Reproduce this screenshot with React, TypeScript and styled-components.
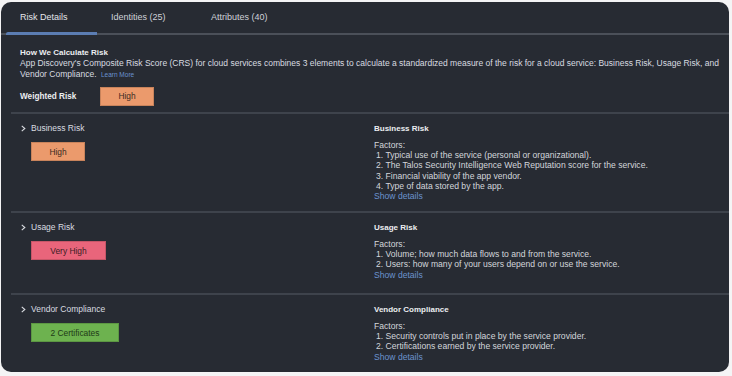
import styled, {createGlobalStyle} from "styled-components";

const GlobalStyle = createGlobalStyle`
  html, body {
    margin: 0;
    padding: 0;
    background: #f4f4f5;
  }
  body {
    font-family: "Liberation Sans", Arial, sans-serif;
  }
`;

const Panel = styled.div`
  margin: 2px 3px 0 1px;
  width: 728px;
  height: 370px;
  background: #272b33;
  border-radius: 10px;
  overflow: hidden;
  color: #d9dbe0;
  display: flex;
  flex-direction: column;
`;

const TabBar = styled.div`
  display: flex;
  height: 31px;
  border-bottom: 2px solid #4b5059;
  padding-left: 5px;
`;

const Tab = styled.div<{ $active?: boolean; $width: number }>`
  position: relative;
  width: ${p => p.$width}px;
  padding-left: 14px;
  box-sizing: border-box;
  font-size: 9px;
  line-height: 31px;
  color: ${p => (p.$active ? "#e4e6ea" : "#cfd2d8")};

  &::after {
    content: "";
    display: ${p => (p.$active ? "block" : "none")};
    position: absolute;
    left: 0;
    right: 0;
    bottom: -2px;
    height: 3px;
    background: #5b7db3;
    border-radius: 2px 0 0 0;
  }
`;

const Intro = styled.div`
  padding: 12px 5px 6px 19px;
  font-size: 8.5px;
  line-height: 11px;
`;

const Heading = styled.div`
  font-weight: bold;
  font-size: 8px;
  line-height: 11px;
  color: #eceef1;
`;

const TextLine = styled.div`
  white-space: nowrap;
`;

const Link = styled.span`
  color: #6b93cf;
  font-size: 6.5px;
  margin-left: 2px;
`;

const WeightedRow = styled.div`
  display: flex;
  align-items: center;
  margin-top: 7px;
`;

const WeightedLabel = styled.div`
  width: 80px;
  font-weight: bold;
  font-size: 8.2px;
  color: #eceef1;
`;

const Badge = styled.div<{ $color: string; $width: number; $text: string }>`
  width: ${p => p.$width}px;
  height: 19px;
  box-sizing: border-box;
  background: ${p => p.$color};
  color: ${p => p.$text};
  border: 1px solid rgba(0, 0, 0, 0.15);
  font-size: 8.4px;
  display: flex;
  align-items: center;
  justify-content: center;
`;

const Divider = styled.div`
  height: 2px;
  margin-left: 10px;
  background: #3e434c;
`;

const Row = styled.div<{ $height: number }>`
  display: grid;
  grid-template-columns: 354px 1fr;
  height: ${p => p.$height}px;
  padding: 9px 0 0 19px;
  box-sizing: border-box;
  font-size: 8.6px;
`;

const LeftCol = styled.div`
  display: flex;
  flex-direction: column;
  align-items: flex-start;
  gap: 8px;
`;

const RowLabel = styled.div`
  display: flex;
  align-items: center;
  gap: 4px;
  font-size: 8.5px;
  line-height: 11px;
  color: #d9dbe0;
`;

const Chevron = styled.svg`
  width: 7px;
  height: 7px;
`;

const BadgeWrap = styled.div`
  padding-left: 11px;
`;

const RightCol = styled.div`
  display: flex;
  flex-direction: column;
`;

const Factors = styled.div`
  margin-top: 6px;
  line-height: 10.2px;
  color: #d3d6db;
`;

const FactorItem = styled.div`
  padding-left: 2px;
`;

const ShowDetails = styled.div`
  color: #6b93cf;
  line-height: 10.2px;
`;

type RiskRow = {
    name: string;
    badge: string;
    color: string;
    text: string;
    width: number;
    height: number;
    factors: string[];
};

const rows: RiskRow[] = [
    {
        name: "Business Risk",
        badge: "High",
        color: "#eb9a6c",
        text: "#3a2a22",
        width: 54,
        height: 97,
        factors: [
            "Typical use of the service (personal or organizational).",
            "The Talos Security Intelligence Web Reputation score for the service.",
            "Financial viability of the app vendor.",
            "Type of data stored by the app.",
        ],
    },
    {
        name: "Usage Risk",
        badge: "Very High",
        color: "#e9657b",
        text: "#3a1d24",
        width: 75,
        height: 80,
        factors: [
            "Volume; how much data flows to and from the service.",
            "Users: how many of your users depend on or use the service.",
        ],
    },
    {
        name: "Vendor Compliance",
        badge: "2 Certificates",
        color: "#6db24f",
        text: "#1f3a17",
        width: 88,
        height: 80,
        factors: [
            "Security controls put in place by the service provider.",
            "Certifications earned by the service provider.",
        ],
    },
];

export default function App() {
    return (
        <>
            <GlobalStyle/>
            <Panel>
                <TabBar>
                    <Tab $active $width={91}>Risk Details</Tab>
                    <Tab $width={100}>Identities (25)</Tab>
                    <Tab $width={120}>Attributes (40)</Tab>
                </TabBar>
                <Intro>
                    <Heading>How We Calculate Risk</Heading>
                    <TextLine>
                        App Discovery's Composite Risk Score (CRS) for cloud services combines 3 elements to calculate a
                        standardized measure of the risk for a cloud service: Business Risk, Usage Risk, and
                    </TextLine>
                    <TextLine>
                        Vendor Compliance.{" "}<Link>Learn More</Link>
                    </TextLine>
                    <WeightedRow>
                        <WeightedLabel>Weighted Risk</WeightedLabel>
                        <Badge $color="#eb9a6c" $text="#3a2a22" $width={54}>High</Badge>
                    </WeightedRow>
                </Intro>
                {rows.map((row) => (
                    <div key={row.name}>
                        <Divider/>
                        <Row $height={row.height}>
                            <LeftCol>
                                <RowLabel>
                                    <Chevron viewBox="0 0 8 8">
                                        <path d="M2 1 L5.5 4 L2 7" fill="none" stroke="#d9dbe0" strokeWidth="1.3"/>
                                    </Chevron>
                                    {row.name}
                                </RowLabel>
                                <BadgeWrap>
                                    <Badge $color={row.color} $text={row.text} $width={row.width}>{row.badge}</Badge>
                                </BadgeWrap>
                            </LeftCol>
                            <RightCol>
                                <Heading>{row.name}</Heading>
                                <Factors>
                                    Factors:
                                    {row.factors.map((f, i) => (
                                        <FactorItem key={i}>{i + 1}. {f}</FactorItem>
                                    ))}
                                </Factors>
                                <ShowDetails>Show details</ShowDetails>
                            </RightCol>
                        </Row>
                    </div>
                ))}
            </Panel>
        </>
    );
}
